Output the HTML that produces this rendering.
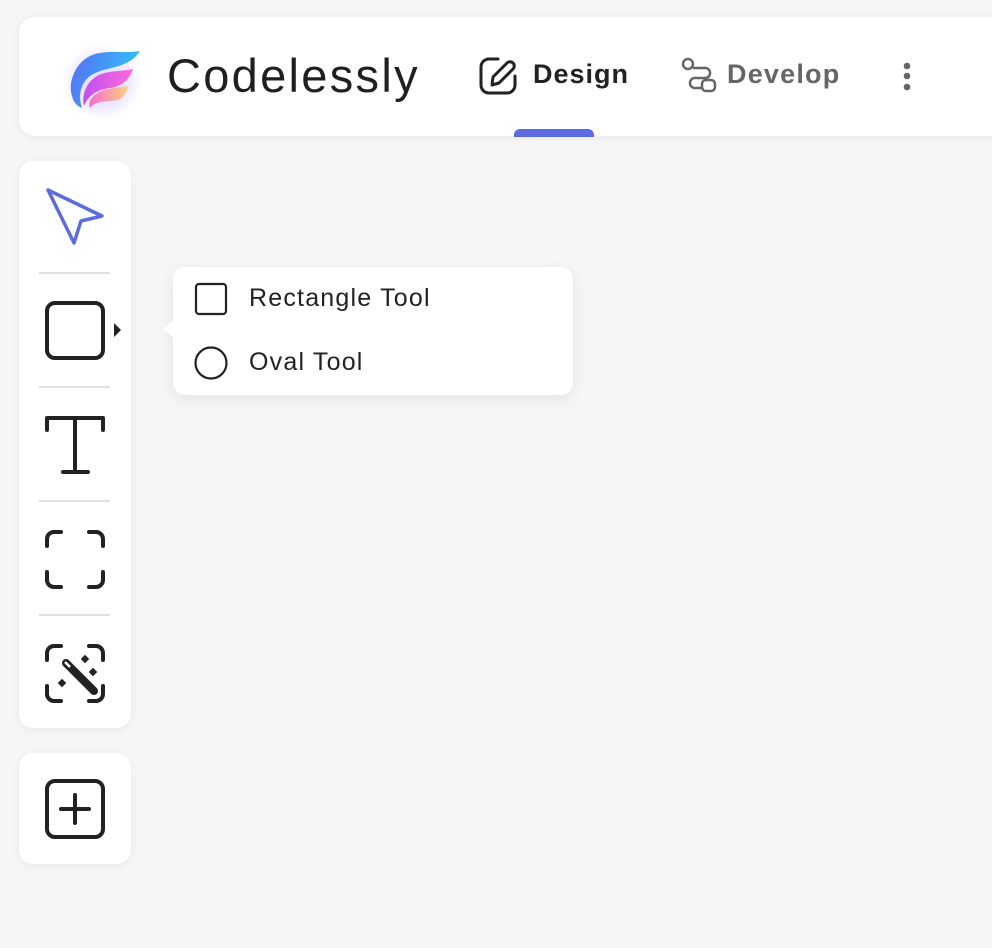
<!DOCTYPE html>
<html><head><style>
body{margin:0;width:992px;height:948px;background:#f6f6f6;font-family:"Liberation Sans",sans-serif;position:relative;overflow:hidden}
.card{position:absolute;background:#fff;border-radius:14px;box-shadow:0 2px 10px rgba(0,0,0,0.06)}
.t{position:absolute;white-space:nowrap}
</style></head><body>
<div class="card" style="left:19px;top:17px;width:1000px;height:119px;border-radius:16px"></div>
<div style="position:absolute;left:514px;top:129px;width:80px;height:8px;background:#5b6be0;border-radius:6px 6px 0 0"></div>
<svg style="position:absolute;left:0;top:0" width="992" height="948">
<defs>
<linearGradient id="g1" x1="0" y1="0" x2="1" y2="0.3"><stop offset="0" stop-color="#5a6cf5"/><stop offset="0.6" stop-color="#3fa0f8"/><stop offset="1" stop-color="#30c0f8"/></linearGradient>
<linearGradient id="g2" x1="0" y1="0" x2="1" y2="0"><stop offset="0" stop-color="#c050f0"/><stop offset="1" stop-color="#ff6ad8"/></linearGradient>
<linearGradient id="g3" x1="0" y1="0" x2="1" y2="0"><stop offset="0" stop-color="#f070d0"/><stop offset="1" stop-color="#ffd080"/></linearGradient>
<filter id="bl"><feGaussianBlur stdDeviation="6"/></filter>
</defs>
<ellipse cx="102" cy="82" rx="32" ry="30" fill="#c9b8ff" opacity="0.4" filter="url(#bl)"/>
<path d="M140 51 C122 54 104 49 90 56 C74 64 68 84 72 96 C74 104 78 106 82 108 C78 96 80 84 90 76 C104 66 128 70 140 51Z" fill="url(#g1)"/>
<path d="M133 69 C120 72 104 70 94 78 C84 86 82 98 84 106 C88 96 96 90 110 88 C124 86 130 78 133 69Z" fill="url(#g2)"/>
<path d="M128 86 C116 88 104 88 96 94 C90 98 88 104 90 108 C96 100 108 102 118 100 C124 98 127 92 128 86Z" fill="url(#g3)"/>
<!-- design icon -->
<path d="M498 59 h-9 a8 8 0 0 0 -8 8 v18 a8 8 0 0 0 8 8 h18 a8 8 0 0 0 8 -8 v-9" fill="none" stroke="#222" stroke-width="3" stroke-linecap="round"/>
<path d="M492 85 l1 -8 l14 -14 a4 4 0 0 1 6 6 l-14 14 z" fill="#fff" stroke="#222" stroke-width="3" stroke-linejoin="round"/>
<!-- develop icon -->
<g fill="none" stroke="#666" stroke-width="2.5" stroke-linecap="round">
<circle cx="688" cy="64" r="5"/><rect x="702" y="80" width="13" height="11" rx="4"/>
<path d="M694 68 L704 68 a5 5 0 0 1 2 10 h-10 a5 5 0 0 0 -6 5 a5 5 0 0 0 6 5 h5"/>
</g>
<circle cx="907" cy="66" r="3.3" fill="#666"/><circle cx="907" cy="76" r="3.3" fill="#666"/><circle cx="907" cy="87" r="3.3" fill="#666"/>
</svg>
<div class="t" style="left:167px;top:48px;font-size:47px;color:#1f1f1f;letter-spacing:2.3px">Codelessly</div>
<div class="t" style="left:533px;top:59px;font-size:27px;font-weight:bold;color:#222;letter-spacing:1px">Design</div>
<div class="t" style="left:727px;top:59px;font-size:27px;font-weight:bold;color:#666;letter-spacing:1.2px">Develop</div>

<div class="card" style="left:19px;top:161px;width:112px;height:567px"></div>
<div class="card" style="left:19px;top:753px;width:112px;height:111px"></div>
<div class="card" style="left:173px;top:267px;width:400px;height:128px;border-radius:12px;box-shadow:0 4px 16px rgba(0,0,0,0.08)"></div>
<svg style="position:absolute;left:0;top:0" width="992" height="948">
<path d="M174 320 L163 329 L174 338Z" fill="#fff"/>
<g stroke="#e0e0e0" stroke-width="2"><line x1="39" y1="273" x2="110" y2="273"/><line x1="39" y1="387" x2="110" y2="387"/><line x1="39" y1="501" x2="110" y2="501"/><line x1="39" y1="615" x2="110" y2="615"/></g>
<path d="M48 190 L102 216 L81 221 L74 243 Z" fill="none" stroke="#5b6be0" stroke-width="3.5" stroke-linejoin="round"/>
<g fill="none" stroke="#222" stroke-width="4" stroke-linecap="round" stroke-linejoin="round">
<rect x="47" y="303" width="56" height="55" rx="8"/>
<path d="M47 430 V418 H103 V430 M75 418 V472 M63 472 H88"/>
<path d="M47 546 V539 a7 7 0 0 1 7 -7 h7 M89 532 h7 a7 7 0 0 1 7 7 v7 M103 572 v8 a7 7 0 0 1 -7 7 h-7 M61 587 h-7 a7 7 0 0 1 -7 -7 v-8"/>
<path d="M47 660 V653 a7 7 0 0 1 7 -7 h7 M89 646 h7 a7 7 0 0 1 7 7 v7 M103 686 v8 a7 7 0 0 1 -7 7 h-7 M61 701 h-7 a7 7 0 0 1 -7 -7 v-8"/>
<rect x="47" y="781" width="56" height="56" rx="8"/>
<path d="M75 795 V823 M61 809 H89"/>
</g>
<path d="M114 323 L121 330 L114 337Z" fill="#222"/>
<path d="M66 663 L94 691" stroke="#222" stroke-width="8" stroke-linecap="round"/>
<path d="M65 662 L70 667" stroke="#fff" stroke-width="2.5"/>
<g fill="#222"><rect x="82" y="656" width="6" height="6" transform="rotate(45 85 659)"/><rect x="90" y="669" width="6" height="6" transform="rotate(45 93 672)"/><rect x="59" y="680" width="6" height="6" transform="rotate(45 62 683)"/></g>
<g fill="none" stroke="#222" stroke-width="2.2"><rect x="196" y="284" width="30" height="30" rx="3"/><circle cx="211" cy="363" r="15.5"/></g>
</svg>
<div class="t" style="left:249px;top:284px;font-size:25px;color:#222;letter-spacing:1.2px">Rectangle Tool</div>
<div class="t" style="left:249px;top:348px;font-size:25px;color:#222;letter-spacing:1.2px">Oval Tool</div>
</body></html>
